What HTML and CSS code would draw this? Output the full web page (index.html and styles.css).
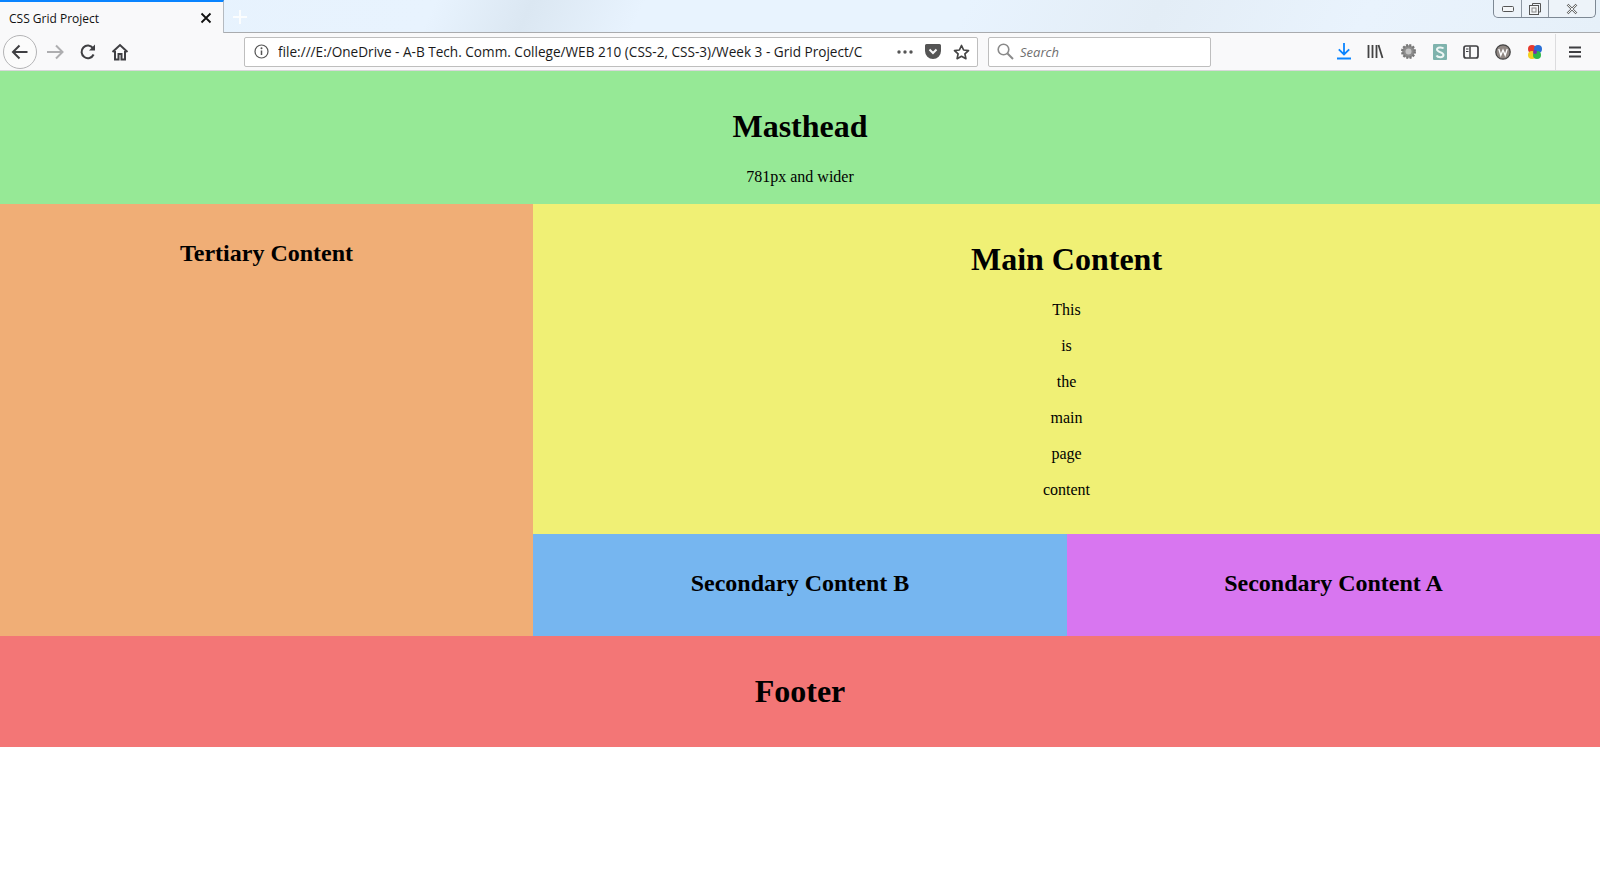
FILE: index.html
```html
<!DOCTYPE html>
<html lang="en">
<head>
<meta charset="utf-8">
<title>CSS Grid Project</title>
<link rel="stylesheet" href="styles.css">
</head>
<body>
<header class="browser">
  <div class="tabbar">
    <div class="tab">
      <span class="tab-title">CSS Grid Project</span>
      <svg class="tab-close" width="12" height="12" viewBox="0 0 12 12"><path d="M1.5 1.5l9 9M10.5 1.5l-9 9" stroke="#111" stroke-width="1.8" fill="none"/></svg>
    </div>
    <svg class="new-tab" width="16" height="16" viewBox="0 0 16 16"><path d="M8 1v14M1 8h14" stroke="#fff" stroke-width="2" fill="none"/></svg>
    <div class="win-buttons">
      <span class="win-btn win-min"><svg width="14" height="8" viewBox="0 0 14 8"><rect x="1.5" y="1.5" width="11" height="5" rx="1" fill="#f4f6f8" stroke="#555"/></svg></span>
      <span class="win-btn win-max"><svg width="14" height="14" viewBox="0 0 14 14"><path d="M4.5 3V1.5h8V10H11" fill="none" stroke="#555"/><rect x="1.5" y="3.5" width="9" height="9" fill="#f4f6f8" stroke="#555"/><rect x="4" y="6" width="4" height="4" fill="none" stroke="#888"/></svg></span>
      <span class="win-btn win-close"><svg width="14" height="12" viewBox="0 0 14 12"><path d="M2.5 1.5l9 9M11.5 1.5l-9 9" stroke="#666" stroke-width="2.4" fill="none"/><path d="M2.5 1.5l9 9M11.5 1.5l-9 9" stroke="#f2f4f6" stroke-width="1" fill="none"/></svg></span>
    </div>
  </div>
  <div class="navbar">
    <span class="back"><svg width="20" height="20" viewBox="0 0 20 20"><path d="M17.5 10H3.5M9.5 3.5L3 10l6.5 6.5" fill="none" stroke="#3f3f42" stroke-width="2"/></svg></span>
    <svg class="nav-ic forward" width="18" height="18" viewBox="0 0 18 18"><path d="M1 9h15M10 2.5L16.5 9 10 15.5" fill="none" stroke="#aeaeb0" stroke-width="2"/></svg>
    <svg class="nav-ic reload" width="18" height="18" viewBox="0 0 18 18"><path d="M14.6 11.5A6.3 6.3 0 1 1 14 5.2" fill="none" stroke="#3f3f42" stroke-width="2"/><path d="M16 1.5V7.5H10z" fill="#3f3f42"/></svg>
    <svg class="nav-ic home" width="18" height="18" viewBox="0 0 18 18"><path d="M1.5 9L9 2l7.500 7" fill="none" stroke="#3f3f42" stroke-width="2"/><path d="M4 8v8.500h3.500V11h3v5.500H14V8" fill="none" stroke="#3f3f42" stroke-width="2"/></svg>
    <div class="urlbar">
      <svg class="info" width="15" height="15" viewBox="0 0 15 15"><circle cx="7.500" cy="7.500" r="6.500" fill="none" stroke="#555" stroke-width="1.2"/><path d="M7.500 6.500v4.500" stroke="#555" stroke-width="1.500"/><circle cx="7.500" cy="4.300" r="1" fill="#555"/></svg>
      <span class="url">file:///E:/OneDrive - A-B Tech. Comm. College/WEB 210 (CSS-2, CSS-3)/Week 3 - Grid Project/CSS Grid Project.html</span>
      <svg class="dots" width="16" height="4" viewBox="0 0 16 4"><circle cx="2" cy="2" r="1.700" fill="#555"/><circle cx="8" cy="2" r="1.700" fill="#555"/><circle cx="14" cy="2" r="1.700" fill="#555"/></svg>
      <svg class="pocket" width="16" height="15" viewBox="0 0 16 15"><path d="M1.500 0h13A1.500 1.500 0 0 1 16 1.500V7a8 8 0 0 1-16 0V1.500A1.500 1.500 0 0 1 1.500 0z" fill="#555"/><path d="M4.500 5.500L8 9l3.500-3.500" fill="none" stroke="#f9f9fa" stroke-width="2"/></svg>
      <svg class="star" width="17" height="16" viewBox="0 0 17 16"><path d="M8.500 1.500l2.100 4.500 4.900.6-3.600 3.300 1 4.800-4.400-2.400-4.400 2.400 1-4.800-3.600-3.300 4.900-.6z" fill="none" stroke="#444" stroke-width="1.700" stroke-linejoin="round"/></svg>
    </div>
    <div class="searchbar">
      <svg width="17" height="17" viewBox="0 0 17 17"><circle cx="6.500" cy="6.500" r="5.300" fill="none" stroke="#8a8a8a" stroke-width="1.600"/><path d="M10.500 10.500l5.500 5.500" stroke="#8a8a8a" stroke-width="2"/></svg>
      <span class="search-text">Search</span>
    </div>
    <div class="tools">
      <svg width="14" height="17" viewBox="0 0 14 17"><path d="M7 0v11M1.800 6.300L7 11.500l5.200-5.200" fill="none" stroke="#0a84ff" stroke-width="1.800"/><path d="M0 15.500h14" stroke="#0a84ff" stroke-width="2"/></svg>
      <svg width="17" height="15" viewBox="0 0 17 15"><path d="M1.500 1v13M5.500 1v13M9.500 1v13M11.500 1l4 13" fill="none" stroke="#444" stroke-width="1.800"/></svg>
      <svg width="17" height="17" viewBox="0 0 17 17"><circle cx="8.500" cy="8.500" r="6.300" fill="#8c8c8c" stroke="#777" stroke-width="2.400" stroke-dasharray="2 1.300"/><circle cx="8.500" cy="8.500" r="3" fill="#c4c4c4"/></svg>
      <svg width="14" height="16" viewBox="0 0 14 16"><rect width="14" height="16" rx="1" fill="#7fb3ad"/><path d="M10.500 4.500C9.500 3 4 2.800 4 5.500S10.500 8 10.500 11 4.500 13.500 3.500 11.500" fill="none" stroke="#eef6f5" stroke-width="2"/></svg>
      <svg width="16" height="14" viewBox="0 0 16 14"><rect x="1" y="1" width="14" height="12" rx="2" fill="none" stroke="#3f3f42" stroke-width="1.700"/><path d="M7 1.500v11" stroke="#3f3f42" stroke-width="1.500"/><path d="M3 4h2.500M3 6.500h2.500" stroke="#3f3f42" stroke-width="1.200"/></svg>
      <svg width="16" height="16" viewBox="0 0 16 16"><circle cx="8" cy="8" r="7.200" fill="#8f8783" stroke="#444" stroke-width="1.300"/><path d="M3.800 5l2 6.300L8 6l2.200 5.300 2-6.300" fill="none" stroke="#fff" stroke-width="1.300"/></svg>
      <svg width="16" height="16" viewBox="0 0 16 16"><circle cx="5" cy="5" r="4" fill="#e63a2e"/><circle cx="11" cy="5" r="4" fill="#2a6fd6"/><circle cx="5" cy="11" r="4" fill="#f4d21f"/><circle cx="10" cy="11" r="4" fill="#2fb84a"/><circle cx="8" cy="8" r="2" fill="#7a2fb0"/></svg>
    </div>
    <svg class="menu" width="14" height="12" viewBox="0 0 14 12"><path d="M1 1.500h12M1 6h12M1 10.500h12" stroke="#3f3f42" stroke-width="1.900"/></svg>
  </div>
</header>
<main class="page">
  <section class="area masthead"><h1>Masthead</h1><p>781px and wider</p></section>
  <section class="area tertiary"><h2>Tertiary Content</h2></section>
  <section class="area content">
    <h1>Main Content</h1>
    <p>This</p><p>is</p><p>the</p><p>main</p><p>page</p><p>content</p>
  </section>
  <section class="area secondary-b"><h2>Secondary Content B</h2></section>
  <section class="area secondary-a"><h2>Secondary Content A</h2></section>
  <section class="area footer"><h1>Footer</h1></section>
</main>
</body>
</html>
```
FILE: styles.css
```css
* { box-sizing: border-box; }
html, body { margin: 0; padding: 0; background: #fff; }
body { font-family: "Liberation Serif", "Times New Roman", serif; color: #000; }

.browser { font-family: "Open Sans", "Noto Sans", sans-serif; }
.tabbar {
  height: 33px;
  display: flex;
  align-items: flex-start;
  background: linear-gradient(115deg, #e6f2fd 0%, #e8f3fe 27%, #dbe7f2 33%, #e8f3fe 40%, #e8f3fe 60%, #e3edf6 72%, #e9f3fd 85%, #e6f0f9 100%);
  border-bottom: 1px solid #a9abae;
}
.tab {
  width: 224px;
  height: 33px;
  display: flex;
  align-items: center;
  justify-content: space-between;
  padding: 1px 11px 0 9px;
  background: #f9f9fa;
  border-top: 2px solid #0a84ff;
  border-right: 1px solid #b5bac0;
}
.tab-title { font-size: 12px; color: #111; }
.tab-close { display: block; }
.new-tab { margin: 9px 0 0 8px; opacity: .85; }
.win-buttons {
  margin-left: auto;
  margin-right: 4px;
  display: flex;
  height: 18px;
  background: #edf3f9;
  border: 1px solid #7d8894;
  border-top: 0;
  border-radius: 0 0 5px 5px;
}
.win-btn { display: flex; align-items: center; justify-content: center; height: 17px; }
.win-min { width: 28px; border-right: 1px solid #8d97a2; }
.win-max { width: 27px; border-right: 1px solid #8d97a2; }
.win-close { width: 46px; }

.navbar {
  height: 38px;
  display: flex;
  align-items: center;
  background: #f9f9fa;
  border-bottom: 1px solid #d8d8da;
  padding-left: 3px;
}
.back {
  width: 34px;
  height: 34px;
  border: 1px solid #b4b4b6;
  border-radius: 50%;
  display: flex;
  align-items: center;
  justify-content: center;
  background: #fbfbfb;
  flex: none;
}
.nav-ic { display: block; flex: none; }
.forward { margin-left: 9px; }
.reload { margin-left: 15px; }
.home { margin-left: 14px; }
.urlbar {
  width: 734px;
  height: 30px;
  margin-left: 115px;
  display: flex;
  align-items: center;
  background: #fff;
  border: 1px solid #bebebe;
  border-radius: 2px;
  padding: 0 6px 0 9px;
  flex: none;
}
.url {
  width: 585px;
  margin-left: 9px;
  font-size: 13.6px;
  white-space: nowrap;
  overflow: hidden;
  color: #1a1a1a;
  flex: none;
}
.dots { margin-left: 34px; }
.pocket { margin-left: 12px; }
.star { margin-left: 12px; }
.searchbar {
  width: 223px;
  height: 30px;
  margin-left: 10px;
  display: flex;
  align-items: center;
  gap: 6px;
  padding-left: 8px;
  background: #fff;
  border: 1px solid #bebebe;
  border-radius: 2px;
  flex: none;
}
.search-text { font-size: 13px; font-style: italic; color: #6f6f6f; }
.tools {
  display: flex;
  align-items: center;
  gap: 16px;
  margin-left: 126px;
  padding-right: 12px;
  height: 36px;
  border-right: 1px solid #dcdcde;
  flex: none;
}
.menu { margin-left: 12px; flex: none; }

.page {
  display: grid;
  grid-template-columns: 533px 534px 533px;
  grid-template-rows: 133px 330px 102px 111px;
  grid-template-areas:
    "mast mast mast"
    "tert cont cont"
    "tert secb seca"
    "foot foot foot";
}
.area { text-align: center; min-width: 0; }
.area h1 { font-size: 32px; margin: 21.44px 0; }
.area h2 { font-size: 24px; margin: 19.92px 0; }
.area p { margin: 16px 0; line-height: 20px; font-size: 16px; }
.masthead { grid-area: mast; background: #96e996; padding-top: 16px; }
.tertiary { grid-area: tert; background: #f0ae76; padding-top: 16px; }
.content { grid-area: cont; background: #f0f075; padding-top: 16px; }
.secondary-b { grid-area: secb; background: #76b6f0; padding-top: 16px; }
.secondary-a { grid-area: seca; background: #d876f0; padding-top: 16px; }
.footer { grid-area: foot; background: #f37676; padding-top: 16px; }
```
